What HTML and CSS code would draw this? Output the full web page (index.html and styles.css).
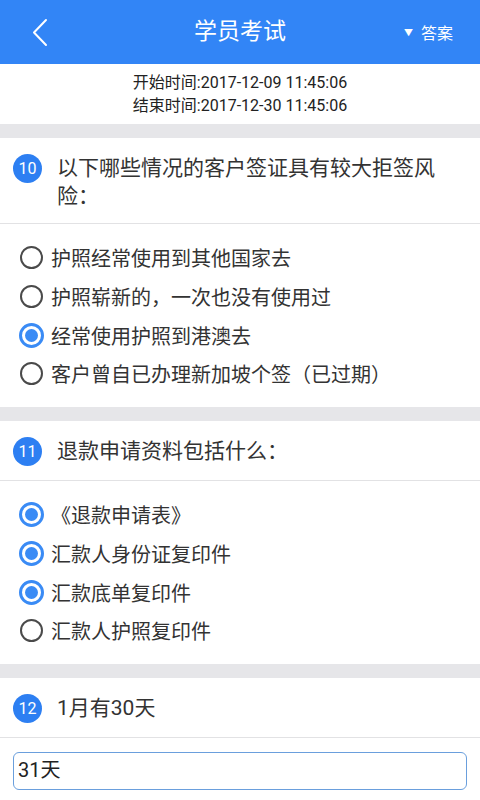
FILE: index.html
```html
<!DOCTYPE html>
<html lang="zh-CN">
<head>
<meta charset="utf-8">
<title>学员考试</title>
<link rel="stylesheet" href="styles.css">
</head>
<body>
<header class="topbar">
  <span class="back">
    <svg width="20" height="30" viewBox="0 0 20 30"><polyline points="14,2 2,14.5 14,27" fill="none" stroke="#fff" stroke-width="2" stroke-linecap="round" stroke-linejoin="round"/></svg>
  </span>
  <h1 class="title">学员考试</h1>
  <span class="answer"><span class="tri">▼</span>答案</span>
</header>

<section class="times">
  <div>开始时间:2017-12-09 11:45:06</div>
  <div>结束时间:2017-12-30 11:45:06</div>
</section>

<div class="gap"></div>

<section class="question">
  <div class="q-head">
    <span class="badge">10</span>
    <p class="q-text">以下哪些情况的客户签证具有较大拒签风险：</p>
  </div>
  <ul class="options">
    <li><span class="radio"></span>护照经常使用到其他国家去</li>
    <li><span class="radio"></span>护照崭新的，一次也没有使用过</li>
    <li><span class="radio on"></span>经常使用护照到港澳去</li>
    <li><span class="radio"></span>客户曾自已办理新加坡个签（已过期）</li>
  </ul>
</section>

<div class="gap"></div>

<section class="question">
  <div class="q-head">
    <span class="badge">11</span>
    <p class="q-text">退款申请资料包括什么：</p>
  </div>
  <ul class="options">
    <li><span class="radio on"></span>《退款申请表》</li>
    <li><span class="radio on"></span>汇款人身份证复印件</li>
    <li><span class="radio on"></span>汇款底单复印件</li>
    <li><span class="radio"></span>汇款人护照复印件</li>
  </ul>
</section>

<div class="gap"></div>

<section class="question">
  <div class="q-head">
    <span class="badge">12</span>
    <p class="q-text">1月有30天</p>
  </div>
  <div class="fill">
    <div class="input">31天</div>
  </div>
</section>
</body>
</html>
```

FILE: styles.css
```css
* { box-sizing: border-box; }
html, body { margin: 0; padding: 0; }
body {
  width: 480px;
  height: 800px;
  overflow: hidden;
  background: #fff;
  font-family: Roboto, "Noto Sans CJK SC", sans-serif;
  color: #333;
}
.topbar {
  height: 64px;
  background: #3285f6;
  display: flex;
  align-items: center;
  position: relative;
  color: #fff;
}
.back {
  width: 20px;
  height: 30px;
  margin-left: 32px;
  margin-top: 1px;
  display: flex;
}
.title {
  position: absolute;
  left: 0;
  right: 0;
  text-align: center;
  margin: 0;
  font-size: 23px;
  font-weight: normal;
  line-height: 64px;
  pointer-events: none;
}
.answer {
  margin-left: auto;
  margin-right: 27px;
  font-size: 16px;
  display: flex;
  align-items: center;
}
.tri { font-size: 9px; margin-right: 8px; }
.times {
  padding: 7px 0 7px;
  text-align: center;
  font-size: 16px;
  line-height: 23px;
  color: #222;
}
.gap { height: 14px; background: #e6e6e9; }
.question { background: #fff; }
.q-head {
  display: flex;
  align-items: flex-start;
  padding: 16px 30px 13px 13px;
  border-bottom: 1px solid #e2e2e4;
}
.badge {
  flex: none;
  width: 29px;
  height: 29px;
  border-radius: 50%;
  background: #2d7ff2;
  color: #fff;
  font-size: 16px;
  line-height: 29px;
  text-align: center;
  margin-bottom: 1.5px;
}
.q-text {
  margin: 0 0 0 15px;
  font-size: 21px;
  line-height: 28px;
  color: #333;
}
.options {
  list-style: none;
  margin: 0;
  padding: 14.5px 0 13.5px 20px;
}
.options li {
  height: 38.67px;
  display: flex;
  align-items: center;
  font-size: 20px;
  color: #333;
}
.radio {
  flex: none;
  width: 23px;
  height: 23px;
  border-radius: 50%;
  border: 2px solid #4a4a4a;
  margin-right: 8px;
  display: flex;
  align-items: center;
  justify-content: center;
}
.radio.on {
  width: 25px;
  height: 25px;
  margin-left: -1px;
  margin-right: 7px;
  border: 3px solid #3a8bf5;
}
.radio.on::after {
  content: "";
  width: 13px;
  height: 13px;
  border-radius: 50%;
  background: #3a8bf5;
}
.fill { padding: 14px 13px 0; }
.input {
  height: 38px;
  border: 1.5px solid #6a9fdd;
  border-radius: 6px;
  padding-left: 4px;
  font-size: 20px;
  line-height: 35px;
  color: #222;
}
```
